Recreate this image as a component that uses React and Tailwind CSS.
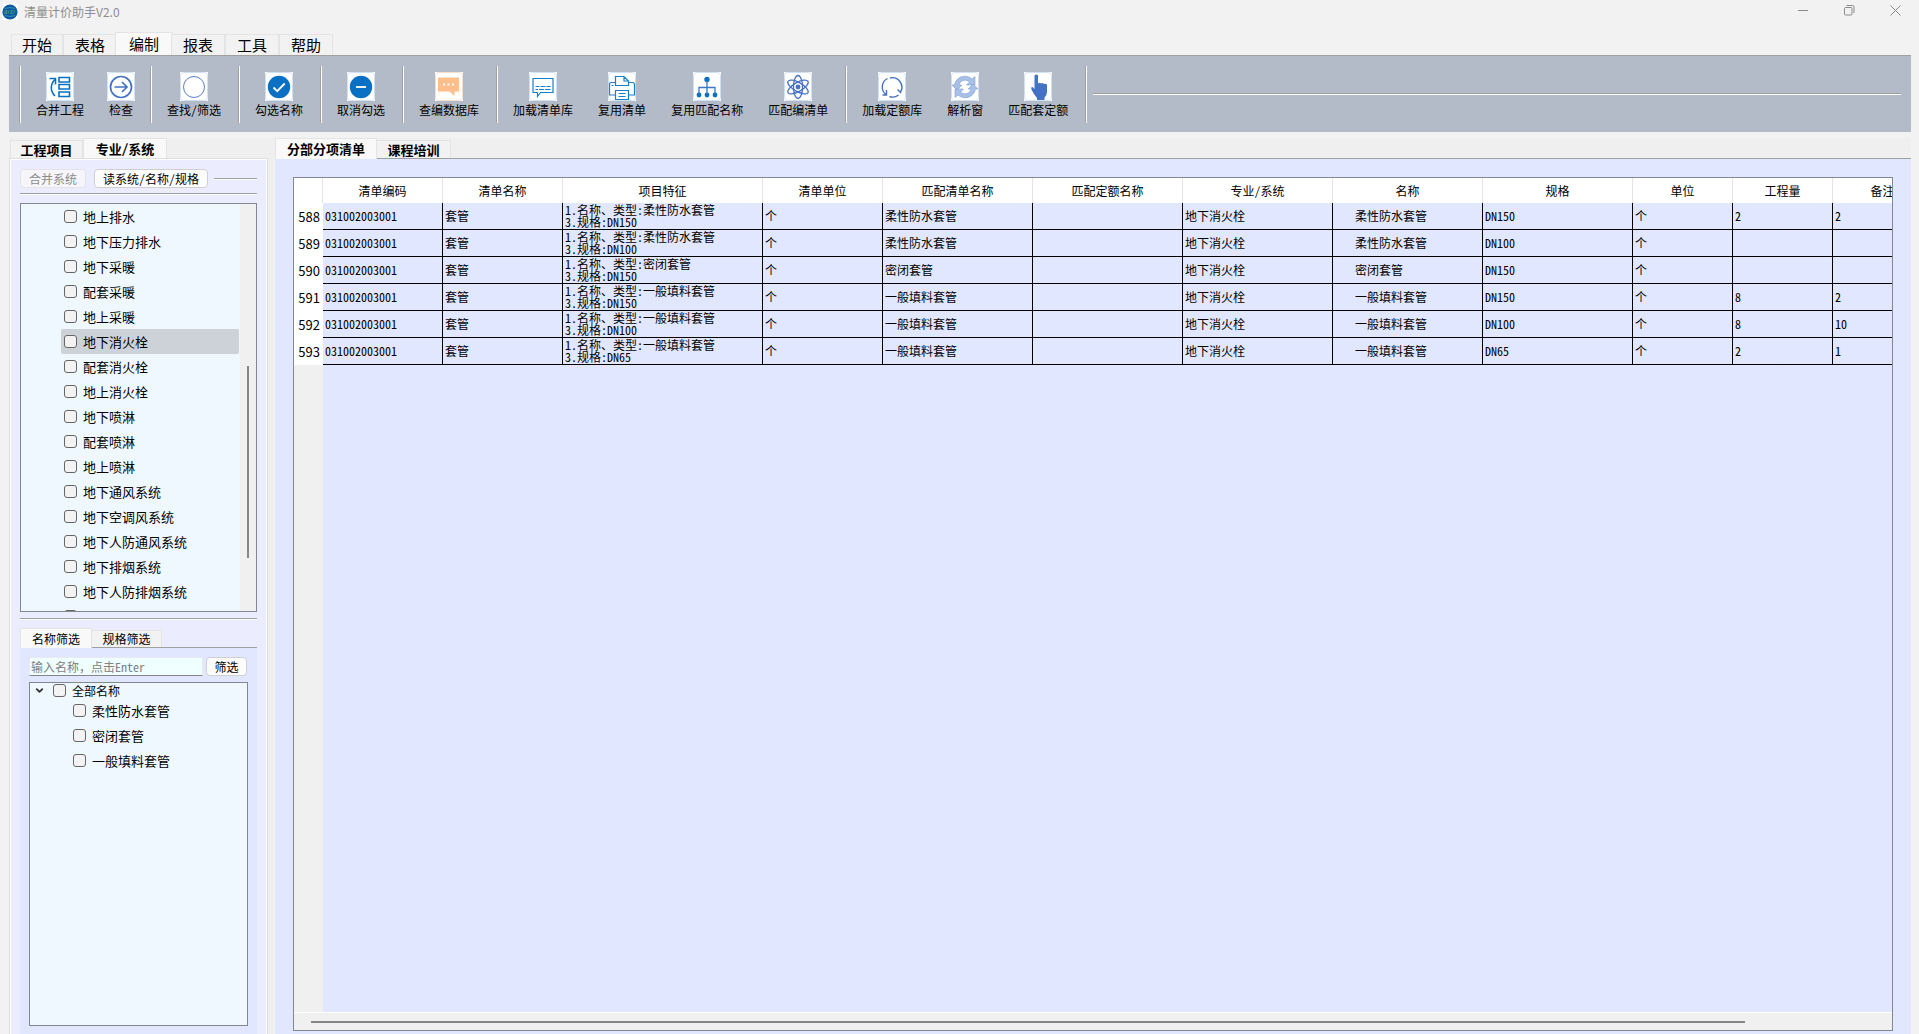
import { clsx } from 'clsx';
import { ChevronDown } from 'lucide-react';

const MENU_TABS = ['开始', '表格', '编制', '报表', '工具', '帮助'];

const TOOL_GROUPS = [
  [
    { label: '合并工程', icon: 'merge' },
    { label: '检查', icon: 'check' },
  ],
  [{ label: '查找/筛选', icon: 'find' }],
  [{ label: '勾选名称', icon: 'tick' }],
  [{ label: '取消勾选', icon: 'minus' }],
  [{ label: '查编数据库', icon: 'chat' }],
  [
    { label: '加载清单库', icon: 'board' },
    { label: '复用清单', icon: 'printer' },
    { label: '复用匹配名称', icon: 'tree' },
    { label: '匹配编清单', icon: 'atom' },
  ],
  [
    { label: '加载定额库', icon: 'cycle' },
    { label: '解析窗', icon: 'sync' },
    { label: '匹配套定额', icon: 'hand' },
  ],
];

const SYSTEMS = [
  '地上排水',
  '地下压力排水',
  '地下采暖',
  '配套采暖',
  '地上采暖',
  '地下消火栓',
  '配套消火栓',
  '地上消火栓',
  '地下喷淋',
  '配套喷淋',
  '地上喷淋',
  '地下通风系统',
  '地下空调风系统',
  '地下人防通风系统',
  '地下排烟系统',
  '地下人防排烟系统',
  '地上通风系统',
];

const NAMES = ['柔性防水套管', '密闭套管', '一般填料套管'];

const COLUMNS = [
  { title: '清单编码', width: 'w-[120px]' },
  { title: '清单名称', width: 'w-[120px]' },
  { title: '项目特征', width: 'w-[200px]' },
  { title: '清单单位', width: 'w-[120px]' },
  { title: '匹配清单名称', width: 'w-[150px]' },
  { title: '匹配定额名称', width: 'w-[150px]' },
  { title: '专业/系统', width: 'w-[150px]' },
  { title: '名称', width: 'w-[150px]' },
  { title: '规格', width: 'w-[150px]' },
  { title: '单位', width: 'w-[100px]' },
  { title: '工程量', width: 'w-[100px]' },
  { title: '备注', width: 'w-[100px]' },
];

const ROWS = [
  { id: 588, name: '柔性防水套管', spec: 'DN150', qty: '2', note: '2' },
  { id: 589, name: '柔性防水套管', spec: 'DN100', qty: '', note: '' },
  { id: 590, name: '密闭套管', spec: 'DN150', qty: '', note: '' },
  { id: 591, name: '一般填料套管', spec: 'DN150', qty: '8', note: '2' },
  { id: 592, name: '一般填料套管', spec: 'DN100', qty: '8', note: '10' },
  { id: 593, name: '一般填料套管', spec: 'DN65', qty: '2', note: '1' },
];

const ICONS = {
  merge: (
    <g fill="none" stroke="#0a70c0" strokeWidth="1.6">
      <path d="M9 24C4 19 4 12 9.5 7M3.500 6.500h6v6" />
      <path d="M13 5.500h10.500v4.500H13zM13 12.500h10.500v4.500H13zM13 20h10.500v4.500H13z" />
    </g>
  ),
  check: (
    <g fill="none" stroke="#4472c4" strokeWidth="1.7">
      <circle cx="14" cy="15" r="10.5" />
      <path d="M7.500 15h12M15 10l5 5-5 5" />
    </g>
  ),
  find: <circle cx="14" cy="15" r="10.5" fill="none" stroke="#4472c4" strokeWidth="0.9" />,
  tick: (
    <g>
      <circle cx="14" cy="15" r="11.2" fill="#0a70c4" />
      <path d="M8.500 15.500l3.700 3.700 7.500-7.700" fill="none" stroke="#fff" strokeWidth="1.8" />
    </g>
  ),
  minus: (
    <g>
      <circle cx="14" cy="15" r="11.2" fill="#0a70c4" />
      <path d="M9 15h10" stroke="#fff" strokeWidth="1.8" />
    </g>
  ),
  chat: (
    <g>
      <path d="M3 5.500h21v14h-4.500v4.500l-5-4.500H3z" fill="#ffbe8c" />
      <path d="M8 12.500h2M12.500 12.500h2M17 12.500h2" stroke="#fff" strokeWidth="2" />
    </g>
  ),
  board: (
    <g fill="none" stroke="#1a7fcb">
      <path d="M4 6.500h20v14H11.500L8.500 24.500V20.500H4z" strokeWidth="1.2" />
      <path d="M6.500 14.500h4M11.500 14.500h5M17.500 14.500h4M6.500 17.500h2.500M10 17.500h5M16 17.500h5.500" />
    </g>
  ),
  printer: (
    <g fill="none" stroke="#1a7fcb" strokeWidth="1.2">
      <path d="M7.500 13.500V4.500H16l4.500 4.500v4.500zM16 4.500v4.500h4.500" />
      <path d="M7.500 10.500H3.500q-2 0-2 2v10.500h6M20.500 10.500h4q2 0 2 2v10.500h-6M3.500 13.500h2" />
      <path d="M7.500 18.500h13v9h-13zM10.500 21.500h7M10.500 24.500h7" />
    </g>
  ),
  tree: (
    <g fill="#0a70c4">
      <circle cx="14" cy="7.5" r="2.7" />
      <circle cx="6" cy="23" r="2.4" />
      <circle cx="14" cy="23" r="2.4" />
      <circle cx="22" cy="23" r="2.4" />
      <path d="M6 21v-5.500h16V21M14 9v13" fill="none" stroke="#3a78c4" strokeWidth="1.3" />
    </g>
  ),
  atom: (
    <g fill="none" stroke="#4472c4" strokeWidth="1.3">
      <ellipse cx="14" cy="15" rx="4.5" ry="11.5" />
      <ellipse cx="14" cy="15" rx="4.5" ry="11.5" transform="rotate(60 14 15)" />
      <ellipse cx="14" cy="15" rx="4.5" ry="11.5" transform="rotate(120 14 15)" />
      <circle cx="14" cy="15" r="1.8" fill="#4472c4" />
    </g>
  ),
  cycle: (
    <g fill="none" stroke="#4472c4" strokeWidth="1.4">
      <path d="M9.500 6.500A9.500 9.500 0 0 0 8 22.500M8.500 18v5H4.500" />
      <path d="M12 6A9.500 9.500 0 0 1 22.500 20M19.500 17.500l3 3 1.500-4" />
      <path d="M20.500 23A9.500 9.500 0 0 1 11.500 24.500" />
    </g>
  ),
  sync: (
    <g fill="#a9c0e6" stroke="#7f9fd6" strokeWidth="0.6">
      <path d="M3.500 13C5 4.500 15 1.500 21 7L24 4.500V13H15.500L18.500 10C14.500 6.500 9 8.500 8 13H11L6 18 1 13z" />
      <path d="M24.500 17C23 25.500 13 28.500 7 23L4 25.500V17H12.500L9.500 20C13.500 23.500 19 21.500 20 17H17L22 12 27 17z" />
    </g>
  ),
  hand: (
    <path
      d="M10.500 3.500q2-2 3.500 0V11.500q1.500-1.500 3 0 1.500-1 3 .5 2-.8 3 1V20q0 3-2.500 5.500V28H13v-2q-3-3-5.500-8.500-1-3 1-2.500l2 2z"
      fill="#4472c4"
    />
  ),
};

function ToolIcon({ name }) {
  return (
    <svg viewBox="0 0 28 29" className="-mx-[2px] my-px h-[29px] w-7 bg-white" aria-hidden="true">
      <rect x="0.5" y="0.5" width="27" height="28" rx="3" fill="none" stroke={name === 'chat' ? '#f6dccb' : '#cfe0f2'} />
      {ICONS[name]}
    </svg>
  );
}

function HLine({ className }) {
  return <div className={clsx('h-[2px] border-t border-[#a0a0a0] bg-white', className)} />;
}

function Tab({ active, className, children }) {
  return (
    <button
      role="tab"
      aria-selected={!!active}
      className={clsx(
        'border border-b-0 border-[#e4e4e4] text-center whitespace-nowrap',
        active ? 'bg-[#f9f9f9]' : 'border-b bg-[#f2f2f2]',
        className
      )}
    >
      {children}
    </button>
  );
}

function CheckItem({ label, className }) {
  return (
    <label className={clsx('flex items-center gap-[6px] whitespace-nowrap', className)}>
      <input
        type="checkbox"
        className="h-[13px] w-[13px] shrink-0 appearance-none rounded-[3px] border border-[#666] bg-[#f3f3f3]"
      />
      <span>{label}</span>
    </label>
  );
}

function TitleBar() {
  return (
    <header className="flex h-6 items-center pl-[2px] font-['Noto_Sans_CJK_SC',sans-serif] text-xs text-[#8e8e8e]">
      <svg viewBox="0 0 16 16" className="h-4 w-4 bg-white" aria-hidden="true">
        <circle cx="8" cy="8" r="7.6" fill="#0b5c9e" />
        <path d="M3 4.500q5-2 10 0M3 11.500q5 2 10 0" fill="none" stroke="#3f95c8" strokeWidth="0.8" />
        <path d="M2.500 9.500l1-3h1.500l-.5 3zM6 9.500l1-3M8.500 6.500h2l-2 3h2M11.500 9.500l1.500-3" fill="none" stroke="#4f9a7a" strokeWidth="0.9" />
      </svg>
      <h1 className="ml-[6px]">清量计价助手V2.0</h1>
      <div className="mr-[18px] ml-auto flex items-center gap-[35px] pb-1">
        <button aria-label="最小化">
          <svg viewBox="0 0 11 11" className="h-[11px] w-[11px]" stroke="#8a8a8a" fill="none">
            <path d="M0 5.500h10" />
          </svg>
        </button>
        <button aria-label="还原">
          <svg viewBox="0 0 11 11" className="h-[11px] w-[11px]" stroke="#8a8a8a" fill="none">
            <rect x="0.5" y="2.5" width="7.5" height="7.5" rx="1" />
            <path d="M2.500 .5H8.500q1.500 0 1.500 1.500V8" />
          </svg>
        </button>
        <button aria-label="关闭">
          <svg viewBox="0 0 11 11" className="h-[11px] w-[11px]" stroke="#8a8a8a" fill="none">
            <path d="M.5 .5l10 10M10.500 .5l-10 10" />
          </svg>
        </button>
      </div>
    </header>
  );
}

function Separator() {
  return <div className="h-[57px] w-[2px] border-l border-[#a0a0a0] bg-white" />;
}

function Ribbon() {
  return (
    <div className="flex h-[77px] shrink-0 items-center border-t border-[#a0a0a0] bg-[#b4bbc8] px-[10px]">
      {TOOL_GROUPS.map((group) => (
        <div key={group[0].label} className="flex items-center">
          <Separator />
          <div className="mr-[17px] ml-[15px] flex gap-[25px]">
            {group.map((tool) => (
              <button key={tool.label} className="flex flex-col items-center text-xs leading-4 whitespace-nowrap">
                <ToolIcon name={tool.icon} />
                {tool.label}
              </button>
            ))}
          </div>
        </div>
      ))}
      <Separator />
      <HLine className="ml-[6px] flex-1" />
    </div>
  );
}

function SystemTree() {
  return (
    <div className="mt-2 flex h-[409px] shrink-0 border border-[#828790] bg-[#f0f8ff] text-[13px]">
      <ul className="flex-1 overflow-hidden pr-px pl-10">
        {SYSTEMS.map((name) => (
          <li key={name}>
            <CheckItem
              label={name}
              className={clsx('h-[25px] rounded-[2px] pl-[3px]', name === '地下消火栓' && 'bg-[#cdd1d8]')}
            />
          </li>
        ))}
      </ul>
      <div className="w-4 bg-[#f0f0f0] pt-[162px] pl-[7px]">
        <div className="h-[192px] w-[2px] bg-[#868686]" />
      </div>
    </div>
  );
}

function NameFilter() {
  return (
    <section className="mt-2 flex min-h-0 flex-1 flex-col text-xs">
      <div role="tablist" className="flex items-end">
        <Tab active className="h-5 w-[72px] leading-4">名称筛选</Tab>
        <div className="flex flex-1 border-b border-[#a0a0a0]">
          <Tab className="h-[17px] w-[70px] border-l-0 leading-4">规格筛选</Tab>
        </div>
      </div>
      <div className="flex min-h-0 flex-1 flex-col bg-[#e0e7ff] px-[9px] pt-[9px] pb-2">
        <div className="flex gap-[3px]">
          <input
            type="text"
            aria-label="名称"
            placeholder="输入名称，点击Enter"
            className="h-[19px] w-0 min-w-0 flex-1 border border-x-[#e8eaf0] border-t-[#e8eaf0] border-b-[#868686] bg-[#f0ffff] px-px outline-none placeholder:text-[#808080]"
          />
          <button className="mr-px h-[19px] w-[41px] rounded border border-[#d0d0d0] bg-[#fdfdfd] leading-4">筛选</button>
        </div>
        <div className="mt-[6px] flex-1 border border-[#828790] bg-[#f0f8ff]">
          <div className="flex h-[15px] items-center gap-2 pl-1">
            <ChevronDown className="h-[11px] w-[11px] text-[#333]" strokeWidth={4} />
            <CheckItem label="全部名称" />
          </div>
          <ul className="pl-[43px] text-[13px]">
            {NAMES.map((name) => (
              <li key={name}>
                <CheckItem label={name} className="h-[25px]" />
              </li>
            ))}
          </ul>
        </div>
      </div>
    </section>
  );
}

function SidePanel() {
  return (
    <aside className="flex w-[259px] shrink-0 flex-col">
      <div role="tablist" className="flex h-5 items-end pl-px text-[13px] font-bold">
        <Tab className="h-[18px] w-[73px] leading-[14px]">工程项目</Tab>
        <Tab active className="h-5 w-[84px] leading-4">专业/系统</Tab>
      </div>
      <div className="flex min-h-0 flex-1 flex-col border border-b-0 border-[#dedede] bg-[#ebedff] px-[10px] pt-[10px] shadow-[inset_1px_1px_0_#fff,inset_-1px_0_0_#fff]">
        <div className="flex items-center text-xs">
          <button disabled className="h-[19px] w-[66px] rounded border border-[#e4e4e8] bg-[#f6f6fa] leading-4 text-[#8c8c8c]">
            合并系统
          </button>
          <button className="ml-2 h-[19px] w-[114px] rounded border border-[#cfcfcf] bg-[#fdfdfd] leading-4">读系统/名称/规格</button>
          <HLine className="ml-[6px] flex-1" />
        </div>
        <HLine className="mt-[5px] shrink-0" />
        <SystemTree />
        <HLine className="mt-[6px] shrink-0" />
        <NameFilter />
      </div>
    </aside>
  );
}

const CELL = 'border-r border-b border-black pr-0 pl-[2px] whitespace-nowrap';

function BillTable() {
  return (
    <div className="flex min-h-0 flex-1 flex-col overflow-hidden border border-[#828790]">
      <div className="min-h-0 flex-1 overflow-hidden bg-linear-to-r from-[#f0f0f0] from-[29px] to-[#e0e7ff] to-[29px]">
        <table className="w-[1639px] table-fixed border-separate border-spacing-0 text-left text-xs">
          <colgroup>
            <col className="w-[29px]" />
            {COLUMNS.map((c) => (
              <col key={c.title} className={c.width} />
            ))}
          </colgroup>
          <thead>
            <tr className="h-[25px] bg-white">
              <td className="border-r border-[#e4e4e4]" />
              {COLUMNS.map((c) => (
                <th key={c.title} scope="col" className="border-r border-[#e4e4e4] p-0 text-center font-normal">
                  {c.title}
                </th>
              ))}
            </tr>
          </thead>
          <tbody>
            {ROWS.map((row) => (
              <tr key={row.id} className="h-[27px]">
                <th
                  scope="row"
                  className="bg-white p-0 pr-[3px] text-right font-['Noto_Sans_CJK_SC',sans-serif] text-[13px] font-normal"
                >
                  {row.id}
                </th>
                <td className={CELL}>031002003001</td>
                <td className={CELL}>套管</td>
                <td className={clsx(CELL, 'leading-3')}>
                  1.名称、类型:{row.name}
                  <br />
                  3.规格:{row.spec}
                </td>
                <td className={CELL}>个</td>
                <td className={CELL}>{row.name}</td>
                <td className={CELL} />
                <td className={CELL}>地下消火栓</td>
                <td className={CELL}>
                  <span className="pl-5">{row.name}</span>
                </td>
                <td className={CELL}>{row.spec}</td>
                <td className={CELL}>个</td>
                <td className={CELL}>{row.qty}</td>
                <td className={CELL}>{row.note}</td>
              </tr>
            ))}
          </tbody>
        </table>
      </div>
      <div className="h-[18px] border-t border-white bg-[#f0f0f0] pt-2 pr-[147px] pl-[17px]">
        <div className="h-[2px] bg-[#868686]" />
      </div>
    </div>
  );
}

export default function App() {
  return (
    <div className="flex h-screen flex-col overflow-hidden bg-[#f2f2f2] font-['Noto_Sans_Mono_CJK_SC','Noto_Sans_CJK_SC',sans-serif] text-black">
      <TitleBar />
      <nav role="tablist" className="flex h-[31px] shrink-0 items-end pl-[11px] text-[15px]">
        {MENU_TABS.map((name) => (
          <Tab
            key={name}
            active={name === '编制'}
            className={
              name === '编制' ? '-mx-[2px] h-[23px] w-[58px] leading-5' : 'h-[21px] w-[54px] leading-5 first:w-[52px]'
            }
          >
            {name}
          </Tab>
        ))}
      </nav>
      <div className="flex min-h-0 flex-1 flex-col pr-2 pl-[9px]">
        <Ribbon />
        <div className="mt-[6px] flex min-h-0 flex-1 gap-[7px] bg-[#efefef]">
          <SidePanel />
          <main className="flex min-w-0 flex-1 flex-col">
            <div role="tablist" className="flex h-[21px] items-end text-[13px] font-bold">
              <Tab active className="h-[21px] w-[102px] leading-[18px]">分部分项清单</Tab>
              <div className="flex flex-1 border-b border-[#a0a0a0]">
                <Tab className="h-[18px] w-[74px] border-l-0 leading-4">课程培训</Tab>
              </div>
            </div>
            <div className="flex min-h-0 flex-1 flex-col bg-[#e0e7ff] px-[18px] pt-[18px] pb-[3px]">
              <BillTable />
            </div>
          </main>
        </div>
      </div>
    </div>
  );
}
